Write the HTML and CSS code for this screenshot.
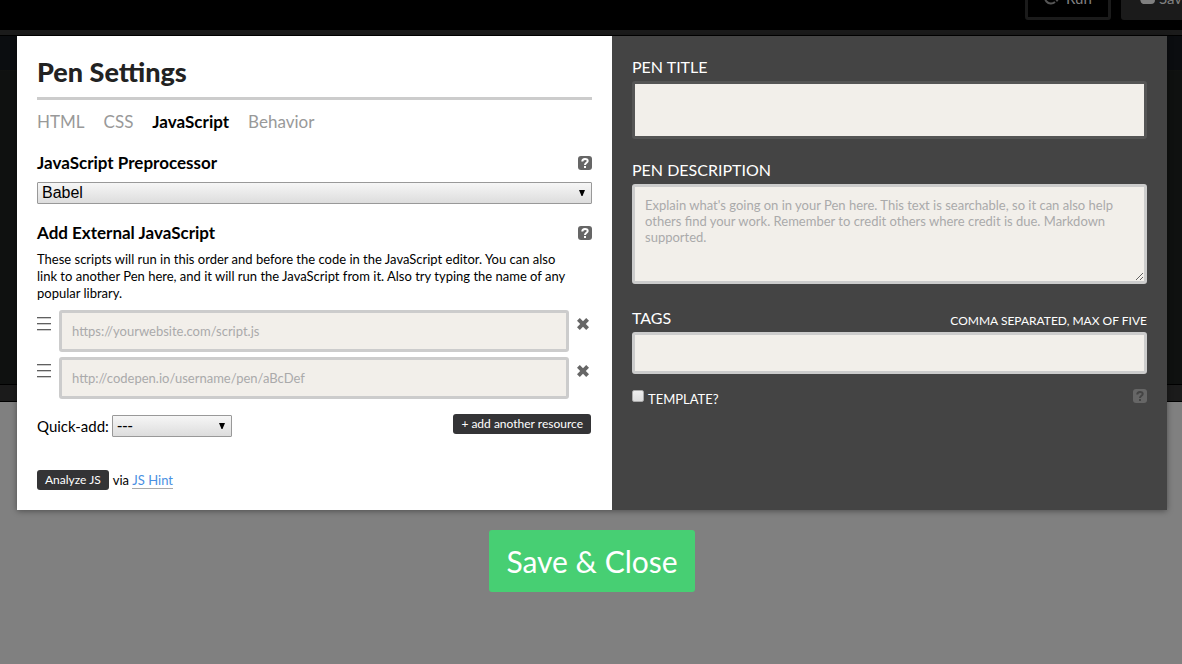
FILE: index.html
```html
<!DOCTYPE html>
<html lang="en">
<head>
<meta charset="utf-8">
<meta name="viewport" content="width=device-width, initial-scale=1">
<title>Pen Settings</title>
<link rel="stylesheet" href="styles.css">
</head>
<body>
<svg width="0" height="0" class="sprite" aria-hidden="true">
  <symbol id="help" viewBox="0 0 14 14"><rect width="14" height="14" rx="3" fill="currentColor"/><path d="M4.300 5.400C4.300 2.200 9.700 2.200 9.700 5 9.700 6.800 7 6.800 7 9" fill="none" stroke="var(--mark)" stroke-width="2"/><path d="M6 10h2v2H6z" fill="var(--mark)"/></symbol>
  <symbol id="cross" viewBox="0 0 12 12"><path fill="currentColor" d="M0 2.800 2.800 0 6 3.200 9.200 0 12 2.800 8.800 6 12 9.200 9.200 12 6 8.800 2.800 12 0 9.200 3.200 6z"/></symbol>
  <symbol id="grip" viewBox="0 0 14 16"><path fill="#606060" d="M0 0h14v1H0zM0 6h14v1H0zM0 12h14v1H0z"/><path fill="#ccc" d="M0 1h14v1H0zM0 7h14v1H0zM0 13h14v1H0z"/></symbol>
  <symbol id="arrow" viewBox="0 0 6 6"><path fill="#000" d="M0 0h6L3.500 6h-1z"/></symbol>
</svg>

<div class="page">
  <header class="topbar">
    <button class="top-button outlined" type="button"><svg width="16" height="14" viewBox="0 0 16 14"><path d="M3 2a5.500 5.500 0 1 0 8 9" fill="none" stroke="currentColor" stroke-width="2"/><path d="M10 7h6l-3 4z" fill="currentColor"/></svg>Run</button>
    <button class="top-button" type="button"><svg width="16" height="12" viewBox="0 0 16 12"><path d="M4 12a4 4 0 0 1-1-7 5 5 0 0 1 9-1 4 4 0 0 1 0 8z" fill="currentColor"/></svg>Save</button>
  </header>
  <div class="editors"></div>
  <div class="drag-bar"></div>
</div>

<div class="overlay">
  <form class="modal">
    <section class="settings">
      <h1 class="title">Pen Settings</h1>
      <nav class="tabs">
        <a href="#html">HTML</a>
        <a href="#css">CSS</a>
        <a href="#js" class="active">JavaScript</a>
        <a href="#behavior">Behavior</a>
      </nav>

      <div class="heading">
        <label for="preprocessor">JavaScript Preprocessor</label>
        <button class="icon-button" type="button" aria-label="Help"><svg width="14" height="14"><use href="#help"/></svg></button>
      </div>
      <div class="select">
        <select id="preprocessor"><option>Babel</option></select>
        <svg class="select-arrow" width="6" height="6"><use href="#arrow"/></svg>
      </div>

      <div class="heading">
        <h2>Add External JavaScript</h2>
        <button class="icon-button" type="button" aria-label="Help"><svg width="14" height="14"><use href="#help"/></svg></button>
      </div>
      <p class="hint">These scripts will run in this order and before the code in the JavaScript editor. You can also link to another Pen here, and it will run the JavaScript from it. Also try typing the name of any popular library.</p>

      <div class="resources">
        <div class="resource">
          <svg class="grip" width="14" height="16"><use href="#grip"/></svg>
          <input class="field" type="text" aria-label="External script 1" placeholder="https://yourwebsite.com/script.js">
          <button class="icon-button remove" type="button" aria-label="Remove"><svg width="12" height="12"><use href="#cross"/></svg></button>
        </div>
        <div class="resource">
          <svg class="grip" width="14" height="16"><use href="#grip"/></svg>
          <input class="field" type="text" aria-label="External script 2" placeholder="http://codepen.io/username/pen/aBcDef">
          <button class="icon-button remove" type="button" aria-label="Remove"><svg width="12" height="12"><use href="#cross"/></svg></button>
        </div>
      </div>

      <div class="quick-add">
        <label for="quick">Quick-add:</label>
        <div class="select quick-select">
          <select id="quick"><option>---</option></select>
          <svg class="select-arrow" width="6" height="6"><use href="#arrow"/></svg>
        </div>
        <button class="mini-button add" type="button">+ add another resource</button>
      </div>

      <div class="analyze">
        <button class="mini-button" type="button">Analyze JS</button>
        <span>via <a href="#jshint">JS Hint</a></span>
      </div>
    </section>

    <section class="details">
      <div class="group">
        <label class="caption" for="pen-title">PEN TITLE</label>
        <input class="field focused" id="pen-title" type="text">
      </div>
      <div class="group">
        <label class="caption" for="description">PEN DESCRIPTION</label>
        <textarea class="field" id="description" placeholder="Explain what's going on in your Pen here. This text is searchable, so it can also help others find your work. Remember to credit others where credit is due. Markdown supported."></textarea>
      </div>
      <div class="group tags">
        <div class="caption-row">
          <label class="caption" for="tags">TAGS</label>
          <span class="note">COMMA SEPARATED, MAX OF FIVE</span>
        </div>
        <input class="field" id="tags" type="text">
      </div>
      <div class="template">
        <input class="check" id="template" type="checkbox">
        <label for="template">TEMPLATE?</label>
        <button class="icon-button" type="button" aria-label="Help"><svg width="14" height="14"><use href="#help"/></svg></button>
      </div>
    </section>
  </form>
  <button class="save" type="button">Save &amp; Close</button>
</div>
</body>
</html>
```
FILE: styles.css
```css
* { box-sizing: border-box; }

body {
  margin: 0;
  background: #808080;
  color: #000;
  font-family: Lato, "Liberation Sans", sans-serif;
  overflow: hidden;
}

button, input, textarea, select { margin: 0; font-family: inherit; }
svg { display: block; flex: none; }
.sprite { position: absolute; }

/* Dimmed editor behind the dialog */
.page { background: #000; }

.topbar {
  display: flex;
  justify-content: flex-end;
  align-items: flex-end;
  gap: 10px;
  height: 30px;
  padding-bottom: 10px;
  margin-right: -25px;
  overflow: hidden;
}

.top-button {
  display: flex;
  align-items: center;
  gap: 4px;
  flex: none;
  width: 86px;
  height: 44px;
  padding: 0 0 0 18px;
  border: 0;
  border-radius: 3px;
  background: #1b1b1b;
  color: #808080;
  font-size: 15px;
}

.top-button.outlined {
  gap: 6px;
  padding-left: 16px;
  border: 3px solid #1b1b1b;
  background: #000;
}
.top-button.outlined svg { color: #555; }

.editors {
  height: 354px;
  border-top: 5px solid #1b1b1b;
  background: linear-gradient(#000 1px, #0b0d10 1px, #0b0d10 35px, #121412 35px, #0f1110 36px);
}

.drag-bar {
  height: 18px;
  border-top: 1px solid #000;
  border-bottom: 1px solid #000;
  background: #1b1b1b;
}

/* Dialog */
.overlay {
  position: absolute;
  inset: 0;
  padding: 36px 15px 20px 17px;
  display: flex;
  flex-direction: column;
  align-items: center;
  gap: 20px;
}

.modal {
  display: grid;
  grid-template-columns: 595fr 555fr;
  width: 100%;
  box-shadow: 0 1px 6px rgba(0, 0, 0, 0.4);
}

.settings { --mark: #fff; padding: 20px; background: #fff; min-width: 0; }
.details { --mark: #444; padding: 21px 20px; background: #444; color: #fff; min-width: 0; }

.title {
  margin: 0 0 10px;
  padding-bottom: 9px;
  border-bottom: 3px solid #ccc;
  color: #222;
  font-size: 27px;
  font-weight: 900;
  line-height: 32px;
}

.tabs {
  display: flex;
  gap: 19px;
  font-size: 17px;
  line-height: 24px;
}
.tabs a { color: #999; text-decoration: none; }
.tabs .active { color: #000; font-weight: 700; }

.heading {
  display: flex;
  align-items: center;
  justify-content: space-between;
  margin-top: 17px;
  font-size: 17px;
  font-weight: 700;
  line-height: 24px;
}
.heading h2 { margin: 0; font-size: inherit; }

.icon-button {
  padding: 0;
  border: 0;
  background: none;
  color: #666;
}

.select { position: relative; margin-top: 7px; }
.select select {
  display: block;
  appearance: none;
  width: 100%;
  height: 22px;
  padding: 0 4px;
  border: 1px solid #999;
  border-radius: 1px;
  background: linear-gradient(#f6f6f6, #ddd);
  color: #000;
  font-family: "Liberation Sans", sans-serif;
  font-size: 16px;
  line-height: 20px;
}
.select-arrow {
  position: absolute;
  top: 8px;
  right: 7px;
  pointer-events: none;
}

.hint { margin: 6px 0 8px; padding-right: 20px; font-size: 13px; line-height: 17px; }

.resources { display: grid; gap: 5px; }
.resource { display: flex; align-items: flex-start; gap: 8px; }
.resource .field { flex: 1; min-width: 0; }
.grip { margin-top: 7px; }
.remove { margin: 8px 3px 0 0; }

.field {
  display: block;
  width: 100%;
  height: 42px;
  padding: 10px;
  border: 3px solid #ccc;
  border-radius: 3px;
  outline: 0;
  background: #f2efea;
  color: #222;
  font-size: 13px;
  line-height: 16px;
}
.field::placeholder { color: #aaa; opacity: 1; }
.field.focused { height: 58px; border-color: #555; }
textarea.field { height: 100px; resize: vertical; }

.quick-add {
  display: flex;
  align-items: flex-end;
  gap: 3px;
  min-height: 23px;
  margin-top: 15px;
  font-size: 15px;
  line-height: 22px;
}
.quick-select { width: 120px; margin: 0; }

.mini-button {
  height: 20px;
  padding: 0 8px;
  border: 0;
  border-radius: 3px;
  background: #343436;
  color: #fff;
  font-size: 12px;
  line-height: 20px;
}
.mini-button.add { align-self: flex-start; margin: 0 1px 0 auto; }

.analyze {
  display: flex;
  align-items: center;
  gap: 4px;
  margin-top: 33px;
  font-size: 13px;
  line-height: 16px;
}
.analyze a {
  display: inline-block;
  border-bottom: 1px solid #aaa;
  color: #4a90e2;
  text-decoration: none;
}

.group { margin-bottom: 21px; }
.caption { display: block; font-size: 16px; line-height: 20px; margin-bottom: 4px; }
.caption-row { display: flex; justify-content: space-between; align-items: flex-end; }
.note { font-size: 12px; line-height: 16px; margin-bottom: 3px; }
.group.tags { margin: 24px 0 15px; }

.template {
  display: flex;
  align-items: flex-start;
  gap: 4px;
  font-size: 13px;
  line-height: 20px;
}
.template .icon-button { margin-left: auto; }
.check {
  appearance: none;
  width: 12px;
  height: 12px;
  margin-top: 1px;
  border: 1px solid #aaa;
  border-radius: 2px;
  background: linear-gradient(#eee, #ddd);
}

.save {
  height: 62px;
  padding: 0 17px;
  border: 0;
  border-radius: 3px;
  background: #47cf73;
  color: #fff;
  font-size: 30px;
}
```
